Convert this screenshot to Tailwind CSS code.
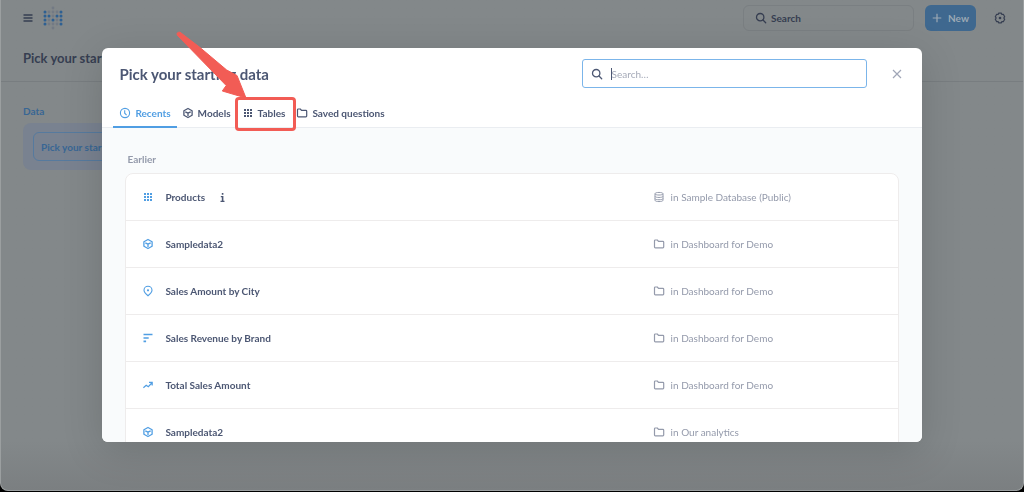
<!DOCTYPE html>
<html lang="en">
<head>
<meta charset="utf-8">
<title>Pick your starting data</title>
<script src="https://cdn.jsdelivr.net/npm/@tailwindcss/browser@4"></script>
</head>
<body class="bg-black font-['Lato',sans-serif] text-[10px] leading-4 text-[#4c5773]">
<svg class="hidden">
  <symbol id="menu" viewBox="0 0 10 10"><path d="M.5 2h9M.5 5h9M.5 8h9" fill="none" stroke="currentColor" stroke-width="1.500"/></symbol>
  <symbol id="search" viewBox="0 0 12 12"><circle cx="5.200" cy="5.200" r="3.700" fill="none" stroke="currentColor" stroke-width="1.300"/><path d="M8 8l2.700 2.700" stroke="currentColor" stroke-width="1.300" stroke-linecap="round"/></symbol>
  <symbol id="gear" viewBox="0 0 12 12"><path d="M4.600 1.200h2.800l.5 1.300 1.400-.2 1.400 2.400-.9 1.300.9 1.300-1.400 2.400-1.400-.2-.5 1.300H4.600l-.5-1.300-1.400.2-1.400-2.400.9-1.300-.9-1.300 1.400-2.400 1.400.2z" fill="none" stroke="currentColor" stroke-width="1.200" stroke-linejoin="round"/><circle cx="6" cy="6" r="1.300" fill="currentColor"/></symbol>
  <symbol id="clock" viewBox="0 0 12 12"><circle cx="6" cy="6" r="4.600" fill="none" stroke="currentColor" stroke-width="1.100"/><path d="M5.700 3.200v3l1.900 1.900" fill="none" stroke="currentColor" stroke-width="1.100"/></symbol>
  <symbol id="model" viewBox="0 0 12 12"><path d="M6 1.500l4.100 2.200v4.600L6 10.500 1.900 8.300V3.700zM3.300 4.800L6 6.200l2.700-1.400M6 6.200v2.900" fill="none" stroke="currentColor" stroke-width="1.300" stroke-linejoin="round"/></symbol>
  <symbol id="table" viewBox="0 0 12 12"><path d="M2 2h2v2H2zM5 2h2v2H5zM8 2h2v2H8zM2 5h2v2H2zM5 5h2v2H5zM8 5h2v2H8zM2 8h2v2H2zM5 8h2v2H5zM8 8h2v2H8z" fill="currentColor"/></symbol>
  <symbol id="folder" viewBox="0 0 12 12"><path d="M1.500 2.800q0-.8.8-.8h2l1.200 1.400h4.400q.8 0 .8.800v4.800q0 .8-.8.800H2.300q-.8 0-.8-.8z" fill="none" stroke="currentColor" stroke-width="1.200" stroke-linejoin="round"/></symbol>
  <symbol id="database" viewBox="0 0 12 12"><path d="M2 2.700C2 1 10 1 10 2.700v6.600c0 1.700-8 1.700-8 0zM2 2.900c.5 1.500 7.500 1.500 8 0M2 5.400c.5 1.400 7.500 1.400 8 0M2 7.700c.5 1.400 7.500 1.400 8 0" fill="none" stroke="currentColor"/></symbol>
  <symbol id="pin" viewBox="0 0 12 12"><path d="M6 10.700C3.800 8.900 2 7.400 2 5.300a4 4 0 0 1 8 0C10 7.400 8.200 8.900 6 10.700z" fill="none" stroke="currentColor" stroke-width="1.100"/><circle cx="6" cy="5.300" r="1.100" fill="currentColor"/></symbol>
  <symbol id="bars" viewBox="0 0 12 12"><path d="M1.500 2.500h9M1.500 6h5.200M1.500 9.400h2.600" stroke="currentColor" stroke-width="1.700"/></symbol>
  <symbol id="trend" viewBox="0 0 12 12"><path d="M1.400 8.800l2.800-2.500 2.100 1.400 3.500-3.700M7 3.300h3.200v3.200" fill="none" stroke="currentColor" stroke-width="1.200"/></symbol>
</svg>

<div class="flex h-screen flex-col pb-px">
  <div class="flex-1 overflow-hidden rounded-b-lg border-x border-b border-[#9b9fa0] bg-[#83888a] bg-linear-to-b from-[#83888a] from-90% to-[#7b7f81] text-[#363e51]">
    <header class="flex h-[35px] items-center pr-[15px] pl-[19px]">
      <button aria-label="Menu" class="grid size-4 place-items-center"><svg class="size-[10px]"><use href="#menu"/></svg></button>
      <a href="#" aria-label="Home" class="ml-[7px] block">
        <svg class="h-6 w-5" viewBox="0 0 20 24">
          <g fill="#737a84"><circle cx="10" cy="2" r="1.400"/><circle cx="6" cy="6" r="1.400"/><circle cx="10" cy="6" r="1.400"/><circle cx="14" cy="6" r="1.400"/><circle cx="10" cy="10" r="1.400"/><circle cx="6" cy="14" r="1.400"/><circle cx="14" cy="14" r="1.400"/><circle cx="6" cy="18" r="1.400"/><circle cx="10" cy="18" r="1.400"/><circle cx="14" cy="18" r="1.400"/><circle cx="10" cy="22" r="1.400"/></g>
          <g fill="#2e6092"><circle cx="2" cy="6" r="1.500"/><circle cx="18" cy="6" r="1.500"/><circle cx="2" cy="10" r="1.500"/><circle cx="6" cy="10" r="1.500"/><circle cx="14" cy="10" r="1.500"/><circle cx="18" cy="10" r="1.500"/><circle cx="2" cy="14" r="1.500"/><circle cx="10" cy="14" r="1.500"/><circle cx="18" cy="14" r="1.500"/><circle cx="2" cy="18" r="1.500"/><circle cx="18" cy="18" r="1.500"/></g>
        </svg>
      </a>
      <button class="ml-auto flex h-[26px] w-[171px] items-center gap-1 rounded-md border border-[#7a7f82] px-[11px] font-bold"><svg class="size-3"><use href="#search"/></svg>Search</button>
      <button class="ml-[11px] flex h-[26px] w-[51px] items-center justify-center gap-1.5 rounded-md bg-[#3f688f] font-bold text-[#9ca8b4]"><svg class="size-[10px]" viewBox="0 0 10 10"><path d="M5 .7v8.600M.7 5h8.600" stroke="currentColor" stroke-width="1.200"/></svg>New</button>
      <button aria-label="Settings" class="ml-4 grid size-4 place-items-center"><svg class="size-3"><use href="#gear"/></svg></button>
    </header>
    <div class="flex h-[47px] items-center border-b border-[#787d80] px-[22px]"><h1 class="text-[13px] font-bold">Pick your starting data</h1></div>
    <main class="px-[22px] pt-[21px]">
      <h2 class="font-bold text-[#386694]">Data</h2>
      <div class="mt-1 w-2/3 rounded-lg bg-[#798290] px-2.5 py-[9px]">
        <button class="h-[29px] rounded-md border border-[#567a9e] px-[7px] font-bold text-[#386694]">Pick your starting data</button>
      </div>
    </main>
  </div>
</div>

<div class="fixed inset-0 flex items-center justify-center pb-0.5">
  <section role="dialog" aria-labelledby="dialog-title" class="relative flex h-[80vh] w-4/5 flex-col rounded-md bg-white shadow-[0_8px_40px_rgba(0,0,0,0.15)]">
    <div class="flex items-center px-[17px] pt-[11px]">
      <h2 id="dialog-title" class="text-[15px] font-bold">Pick your starting data</h2>
      <label class="ml-auto flex h-[29px] w-[285px] items-center gap-2 rounded-[3px] border border-[#7bb5ea] px-2">
        <svg class="size-3"><use href="#search"/></svg>
        <span class="flex flex-1 items-center"><span class="h-3 w-px bg-[#4c5773]"></span><input type="text" aria-label="Search" placeholder="Search…" class="w-full outline-none placeholder:text-[#a5aab8]"></span>
      </label>
      <button aria-label="Close" class="ml-[22px] grid size-4 place-items-center text-[#a0a6b7]"><svg class="size-[10px]" viewBox="0 0 10 10"><path d="M1 1l8 8M9 1l-8 8" stroke="currentColor" stroke-width="1.200"/></svg></button>
    </div>
    <div role="tablist" class="flex h-10 items-end border-b border-[#eaedf1] pl-[11px] font-bold">
      <button role="tab" aria-selected="true" class="-mb-px flex h-[29px] items-center gap-1 border-b-2 border-[#509ee3] px-1.5 text-[#509ee3]"><svg class="size-3"><use href="#clock"/></svg>Recents</button>
      <button role="tab" class="flex h-7 items-center gap-1 pl-[5px]"><svg class="size-3"><use href="#model"/></svg>Models</button>
      <button role="tab" class="relative ml-[5px] flex h-7 items-center gap-1 px-1.5"><svg class="size-3"><use href="#table"/></svg>Tables<span class="absolute -inset-x-px -top-0.5 -bottom-1 rounded-[4px] border-[3px] border-[#f25c55]"></span>
        <svg class="absolute right-[47px] bottom-[28px] h-[68px] w-[72px] overflow-visible" viewBox="176 31 72 68"><path d="M180 32.200L200 47.500 226.700 70 237 75.500 246 98 222.300 91 226.200 85.500 177.300 35.200Q176.200 32 180 32.200z" fill="#f25c55" stroke="#f25c55" stroke-width="1" stroke-linejoin="round"/></svg>
      </button>
      <button role="tab" class="ml-px flex h-7 items-center gap-1"><svg class="size-3"><use href="#folder"/></svg>Saved questions</button>
    </div>
    <div class="min-h-0 flex-1 overflow-hidden rounded-b-md bg-[#f9fbfc] px-[23px] pt-[23px]">
      <h3 class="px-0.5 font-bold text-[#949aab]">Earlier</h3>
      <table class="mt-1.5 w-full table-fixed border-separate border-spacing-0 rounded-t-lg border border-[#eeecec] bg-white text-left">
        <colgroup><col><col class="w-[245px]"></colgroup>
        <tbody class="[&>tr>*]:h-[47px] [&>tr>*]:border-b [&>tr>*]:border-[#eeecec] [&_td]:text-[#949aab]">
          <tr><th><div class="flex items-center pl-4"><svg class="mr-[11px] size-3 text-[#509ee3]"><use href="#table"/></svg>Products<button aria-label="More info" class="ml-[11px] grid size-3 place-items-center"><svg class="h-[9px] w-[5px]" viewBox="0 0 5 9"><path d="M1.800 0h1.600v1.700H1.800zM.8 3h2.600v4.700h1.100V9H.5V7.700h1.300V4.200h-1z" fill="currentColor"/></svg></button></div></th><td><div class="flex items-center gap-1.5"><svg class="size-3"><use href="#database"/></svg>in Sample Database (Public)</div></td></tr>
          <tr><th><div class="flex items-center pl-4"><svg class="mr-[11px] size-3 text-[#509ee3]"><use href="#model"/></svg>Sampledata2</div></th><td><div class="flex items-center gap-1.5"><svg class="size-3"><use href="#folder"/></svg>in Dashboard for Demo</div></td></tr>
          <tr><th><div class="flex items-center pl-4"><svg class="mr-[11px] size-3 text-[#509ee3]"><use href="#pin"/></svg>Sales Amount by City</div></th><td><div class="flex items-center gap-1.5"><svg class="size-3"><use href="#folder"/></svg>in Dashboard for Demo</div></td></tr>
          <tr><th><div class="flex items-center pl-4"><svg class="mr-[11px] size-3 text-[#509ee3]"><use href="#bars"/></svg>Sales Revenue by Brand</div></th><td><div class="flex items-center gap-1.5"><svg class="size-3"><use href="#folder"/></svg>in Dashboard for Demo</div></td></tr>
          <tr><th><div class="flex items-center pl-4"><svg class="mr-[11px] size-3 text-[#509ee3]"><use href="#trend"/></svg>Total Sales Amount</div></th><td><div class="flex items-center gap-1.5"><svg class="size-3"><use href="#folder"/></svg>in Dashboard for Demo</div></td></tr>
          <tr><th><div class="flex items-center pl-4"><svg class="mr-[11px] size-3 text-[#509ee3]"><use href="#model"/></svg>Sampledata2</div></th><td><div class="flex items-center gap-1.5"><svg class="size-3"><use href="#folder"/></svg>in Our analytics</div></td></tr>
        </tbody>
      </table>
    </div>
  </section>
</div>
</body>
</html>
